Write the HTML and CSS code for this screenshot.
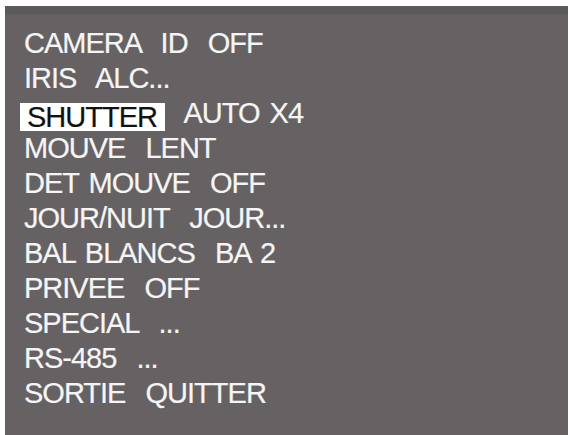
FILE: index.html
```html
<!DOCTYPE html>
<html>
<head>
<meta charset="utf-8">
<link rel="stylesheet" href="styles.css">
</head>
<body>
<div class="screen">
  <div class="menu">
    <div class="row">CAMERA  ID  OFF</div>
    <div class="row">IRIS  ALC...</div>
    <div class="row"><span class="sel">SHUTTER</span>  AUTO X4</div>
    <div class="row">MOUVE  LENT</div>
    <div class="row">DET MOUVE  OFF</div>
    <div class="row">JOUR/NUIT  JOUR...</div>
    <div class="row">BAL BLANCS  BA 2</div>
    <div class="row">PRIVEE  OFF</div>
    <div class="row">SPECIAL  ...</div>
    <div class="row">RS-485  ...</div>
    <div class="row">SORTIE  QUITTER</div>
  </div>
</div>
</body>
</html>
```
FILE: styles.css
```css
html, body {
  margin: 0;
  padding: 0;
  background: #ffffff;
}
body {
  width: 573px;
  height: 435px;
  overflow: hidden;
  padding-top: 6px;
  box-sizing: border-box;
}
.screen {
  margin-left: 5px;
  width: 563px;
  height: 429px;
  background: #666263;
  border-top: 8px solid #5b595a;
  box-sizing: border-box;
  padding: 12px 0 0 19px;
}
.menu {
  display: flex;
  flex-direction: column;
  font-family: "Liberation Sans", Arial, sans-serif;
  font-size: 29px;
  line-height: 35px;
  letter-spacing: -1px;
  word-spacing: 3px;
  color: #f5f5f5;
  -webkit-text-stroke: 0.2px #f5f5f5;
  white-space: pre;
}
.sel {
  display: inline-block;
  background: #ffffff;
  color: #111111;
  -webkit-text-stroke: 0.2px #111111;
  line-height: 28px;
  height: 28px;
  padding: 0 8px 0 7px;
  margin-left: -4px;
  vertical-align: -4px;
}
```
